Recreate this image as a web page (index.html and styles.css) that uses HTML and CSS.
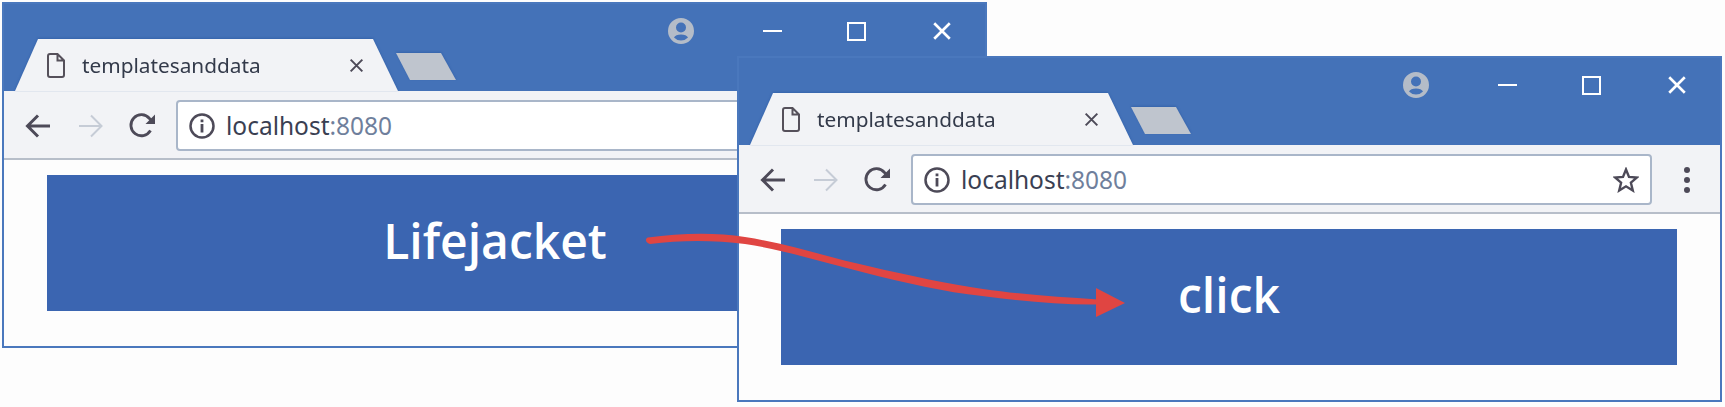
FILE: index.html
```html
<!DOCTYPE html>
<html lang="en">
<head>
    <meta charset="UTF-8">
    <meta name="viewport" content="width=device-width, initial-scale=1.0">
    <title>templatesanddata</title>
    <link rel="stylesheet" href="styles.css">
</head>
<body>
    <svg width="0" height="0" class="defs">
        <symbol id="i-file" viewBox="0 0 18 25"><path d="M1 3a2 2 0 0 1 2-2h7.5L17 7.5V22a2 2 0 0 1-2 2H3a2 2 0 0 1-2-2zM10.500 1v6.500H17" fill="none" stroke="#55505a" stroke-width="2"/></symbol>
        <symbol id="i-x" viewBox="0 0 18 18"><path d="M2 2l14 14M16 2L2 16" fill="none" stroke="currentColor" stroke-width="2.400"/></symbol>
        <symbol id="i-back" viewBox="0 0 26 26"><path d="M25 13H3M13 2.500L2.500 13 13 23.500" fill="none" stroke="currentColor" stroke-width="3"/></symbol>
        <symbol id="i-fwd" viewBox="0 0 26 26"><path d="M1 13h22M13 2.500L23.500 13 13 23.500" fill="none" stroke="currentColor" stroke-width="2"/></symbol>
        <symbol id="i-reload" viewBox="0 0 26 26"><path d="M21.500 17.500A10.500 10.500 0 1 1 20.500 5.500L24 9" fill="none" stroke="currentColor" stroke-width="2.800"/><path d="M26 1.500V11H16.500z" fill="currentColor"/></symbol>
        <symbol id="i-info" viewBox="0 0 26 26"><circle cx="13" cy="13" r="11.500" fill="none" stroke="currentColor" stroke-width="2.500"/><path d="M11.600 11h2.800v8.500h-2.800zM11.600 6.500h2.800v2.800h-2.800z" fill="currentColor"/></symbol>
        <symbol id="i-star" viewBox="0 0 26 26"><path d="M13 2.500l3 7.400 8 .6-6.100 5.200 1.900 7.800L13 19.300l-6.800 4.200 1.900-7.800L2 10.500l8-.6z" fill="none" stroke="#4d4a58" stroke-width="2.400"/></symbol>
        <symbol id="i-user" viewBox="0 0 26 26"><path fill-rule="evenodd" d="M13 0a13 13 0 1 1 0 26a13 13 0 0 1 0-26zM13 4.500a5 5 0 1 0 0 10a5 5 0 0 0 0-10zM13 16.500c-3.500 0-6 1.300-7 3a9.500 9.500 0 0 0 14 0c-1-1.700-3.500-3-7-3z" fill="#b4bcc8"/></symbol>
    </svg>

    <div class="window window-back">
        <div class="titlebar">
            <div class="tabstrip">
                <div class="tab">
                    <svg class="tab-file"><use href="#i-file"/></svg>
                    <span class="tab-title">templatesanddata</span>
                    <svg class="tab-close"><use href="#i-x"/></svg>
                </div>
                <div class="newtab"></div>
            </div>
            <div class="controls">
                <svg class="ctl-user"><use href="#i-user"/></svg>
                <span class="ctl-min"></span>
                <span class="ctl-max"></span>
                <svg class="ctl-close"><use href="#i-x"/></svg>
            </div>
        </div>
        <div class="toolbar">
            <svg class="nav nav-back"><use href="#i-back"/></svg>
            <svg class="nav nav-fwd"><use href="#i-fwd"/></svg>
            <svg class="nav nav-reload"><use href="#i-reload"/></svg>
            <div class="omnibox">
                <svg class="info"><use href="#i-info"/></svg>
                <span class="url">localhost<span class="port">:8080</span></span>
                <svg class="star"><use href="#i-star"/></svg>
            </div>
            <div class="menu"><i></i><i></i><i></i></div>
        </div>
        <div class="content">
            <div class="banner">Lifejacket</div>
        </div>
    </div>

    <div class="window window-front">
        <div class="titlebar">
            <div class="tabstrip">
                <div class="tab">
                    <svg class="tab-file"><use href="#i-file"/></svg>
                    <span class="tab-title">templatesanddata</span>
                    <svg class="tab-close"><use href="#i-x"/></svg>
                </div>
                <div class="newtab"></div>
            </div>
            <div class="controls">
                <svg class="ctl-user"><use href="#i-user"/></svg>
                <span class="ctl-min"></span>
                <span class="ctl-max"></span>
                <svg class="ctl-close"><use href="#i-x"/></svg>
            </div>
        </div>
        <div class="toolbar">
            <svg class="nav nav-back"><use href="#i-back"/></svg>
            <svg class="nav nav-fwd"><use href="#i-fwd"/></svg>
            <svg class="nav nav-reload"><use href="#i-reload"/></svg>
            <div class="omnibox">
                <svg class="info"><use href="#i-info"/></svg>
                <span class="url">localhost<span class="port">:8080</span></span>
                <svg class="star"><use href="#i-star"/></svg>
            </div>
            <div class="menu"><i></i><i></i><i></i></div>
        </div>
        <div class="content">
            <div class="banner">click</div>
        </div>
    </div>

    <svg class="arrow" viewBox="0 0 1725 407">
        <path d="M648 237.500C680 233 715 232 745 237C790 244 830 258 868 266C910 276 950 284 983 289C1025 295 1060 297 1098 299.500L1098 304.500C1060 305 1020 301 982 296C945 292 905 283 866 273C825 263 785 250 745 244C715 240 680 240 650 244C645 243 645 238 648 237.500Z" fill="#e04542"/>
        <path d="M1096 288L1125 303L1096 317Z" fill="#e04542"/>
    </svg>
</body>
</html>
```

FILE: styles.css
```css
body {
    margin: 0;
    width: 1725px;
    height: 407px;
    position: relative;
    overflow: hidden;
    background-color: #fdfdfd;
    font-family: "Noto Sans", sans-serif;
}
.defs {
    position: absolute;
}
.window {
    position: absolute;
    box-sizing: border-box;
    width: 985px;
    height: 346px;
    border: 2px solid #4a78bd;
    background: #fdfdfd;
    display: flex;
    flex-direction: column;
}
.window-back {
    left: 2px;
    top: 2px;
}
.window-front {
    left: 737px;
    top: 56px;
}
.titlebar {
    height: 87px;
    flex: none;
    background: #4472b8;
    display: flex;
    align-items: flex-end;
}
.tabstrip {
    display: flex;
    align-items: flex-end;
    flex: none;
    filter: drop-shadow(0 -1px 1px #3563ab);
}
.tab {
    box-sizing: border-box;
    width: 383px;
    height: 52px;
    margin-left: 11px;
    padding: 0 28px 0 32px;
    background: #f2f3f6;
    clip-path: polygon(23px 0, 358px 0, 383px 100%, 0 100%);
    display: flex;
    align-items: center;
    flex: none;
}
.tab-file {
    width: 18px;
    height: 25px;
    flex: none;
}
.tab-title {
    margin-left: 17px;
    font-size: 20.800px;
    color: #333a4a;
    flex: 1;
}
.tab-close {
    width: 15px;
    height: 15px;
    margin-right: 6px;
    color: #4d4a58;
    flex: none;
}
.newtab {
    width: 60px;
    height: 27px;
    margin: 0 0 11px -2px;
    flex: none;
    background: #bfc5ce;
    clip-path: polygon(0 0, 45px 0, 100% 100%, 14px 100%);
}
.controls {
    align-self: flex-start;
    margin-left: auto;
    height: 54px;
    padding-right: 33px;
    display: flex;
    align-items: center;
    color: #fff;
}
.ctl-user {
    width: 26px;
    height: 26px;
    flex: none;
}
.ctl-min {
    width: 19px;
    height: 2px;
    margin-left: 69px;
    background: #fff;
    flex: none;
}
.ctl-max {
    box-sizing: border-box;
    width: 19px;
    height: 19px;
    margin-left: 65px;
    border: 2px solid #fff;
    flex: none;
}
.ctl-close {
    width: 20px;
    height: 20px;
    margin-left: 66px;
    flex: none;
}
.toolbar {
    height: 69px;
    flex: none;
    box-sizing: border-box;
    padding: 9px 0 7px 21px;
    background: #f2f3f6;
    border-bottom: 2px solid #b7bec9;
    display: flex;
    align-items: center;
    color: #4d4a58;
}
.nav {
    width: 26px;
    height: 26px;
    flex: none;
}
.nav-fwd {
    margin-left: 27px;
    color: #c6ccd6;
}
.nav-reload {
    margin-left: 25px;
}
.omnibox {
    box-sizing: border-box;
    width: 741px;
    height: 51px;
    margin-left: 21px;
    padding: 0 11px;
    background: #fff;
    border: 2px solid #a9b6c9;
    border-radius: 4px;
    display: flex;
    align-items: center;
    flex: none;
}
.info {
    width: 26px;
    height: 26px;
    flex: none;
}
.url {
    margin-left: 11px;
    font-size: 24.500px;
    color: #3a3f52;
    flex: 1;
}
.port {
    color: #6f7f9c;
}
.star {
    width: 26px;
    height: 26px;
    flex: none;
}
.menu {
    margin-left: 32px;
    display: flex;
    flex-direction: column;
    gap: 4px;
}
.menu i {
    display: block;
    width: 6px;
    height: 6px;
    border-radius: 50%;
    background: #4d4a58;
}
.content {
    flex: 1;
    padding: 15px 42px 35px 43px;
    display: flex;
}
.window-front .content {
    padding: 15px 43px 35px 42px;
}
.banner {
    flex: 1;
    box-sizing: border-box;
    padding-bottom: 6px;
    background: #3b65b1;
    color: #fff;
    font-family: "Open Sans", sans-serif;
    font-weight: 600;
    font-size: 48px;
    display: flex;
    align-items: center;
    justify-content: center;
}
.arrow {
    position: absolute;
    left: 0;
    top: 0;
    width: 1725px;
    height: 407px;
}
```
